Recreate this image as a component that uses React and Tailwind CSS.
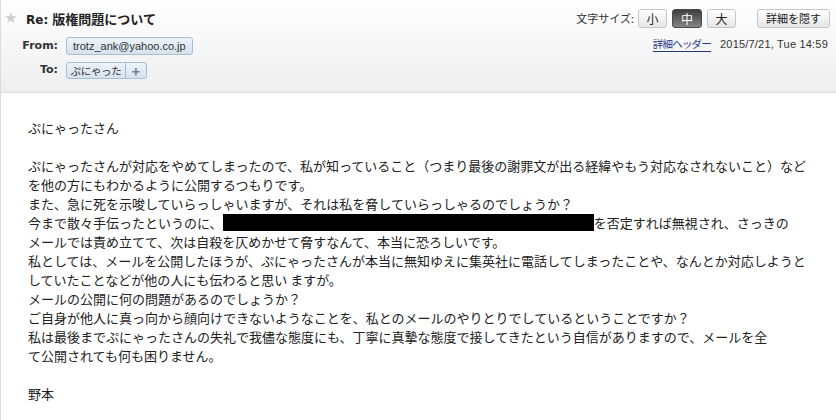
import React from "react";

const jp = { fontFamily: '"Noto Sans CJK JP", "Noto Sans", sans-serif' };

function SmallBtn({ children, active, className = "" }) {
  return (
    <div
      className={
        "h-[19px] flex items-center justify-center rounded-[3px] border " +
        (active
          ? "border-[#4a4a4a] bg-gradient-to-b from-[#3f3f3f] to-[#858585] text-white "
          : "border-[#c6c6c6] bg-gradient-to-b from-white to-[#e6e6e6] text-[#222] ") +
        className
      }
    >
      {children}
    </div>
  );
}

export default function App() {
  const lines = [
    "ぷにゃったさん",
    "",
    "ぷにゃったさんが対応をやめてしまったので、私が知っていること（つまり最後の謝罪文が出る経緯やもう対応なされないこと）など",
    "を他の方にもわかるように公開するつもりです。",
    "また、急に死を示唆していらっしゃいますが、それは私を脅していらっしゃるのでしょうか？",
    "__BOX__",
    "メールでは責め立てて、次は自殺を仄めかせて脅すなんて、本当に恐ろしいです。",
    "私としては、メールを公開したほうが、ぷにゃったさんが本当に無知ゆえに集英社に電話してしまったことや、なんとか対応しようと",
    "していたことなどが他の人にも伝わると思い ますが。",
    "メールの公開に何の問題があるのでしょうか？",
    "ご自身が他人に真っ向から顔向けできないようなことを、私とのメールのやりとりでしているということですか？",
    "私は最後までぷにゃったさんの失礼で我儘な態度にも、丁寧に真摯な態度で接してきたという自信がありますので、メールを全",
    "て公開されても何も困りません。",
    "",
    "野本",
  ];
  return (
    <div className="w-[836px] h-[420px] bg-white border-l border-[#dcdcdc] overflow-hidden" style={jp}>
      <div className="h-[93px] bg-gradient-to-b from-white to-[#eeeeee] border-b border-[#d9d9d9] flex justify-between">
        <div className="flex flex-col pt-[9px]">
          <div className="h-[19px] flex items-center">
            <span className="ml-[3px] w-[14px] text-[15px] leading-none text-[#cfcfcf]" style={{ fontFamily: '"DejaVu Sans", sans-serif' }}>★</span>
            <span className="ml-[8px] text-[13px] font-bold text-[#222] whitespace-nowrap">
              <span style={{ fontFamily: '"DejaVu Sans", sans-serif' }} className="text-[12px]">Re: </span>版権問題について
            </span>
          </div>
          <div className="mt-[9px] h-[18px] flex items-center">
            <span className="w-[57px] text-right text-[11px] font-bold text-[#333]" style={{ fontFamily: '"DejaVu Sans", sans-serif' }}>From:</span>
            <div className="ml-[8px] h-[18px] px-[6px] flex items-center rounded-[3px] border border-[#a9bdd3] bg-gradient-to-b from-[#edf3f9] to-[#d6e2ee] text-[11px] text-[#333]" style={{ fontFamily: '"Liberation Sans", sans-serif' }}>
              trotz_ank@yahoo.co.jp
            </div>
          </div>
          <div className="mt-[7px] h-[17px] flex items-center">
            <span className="w-[57px] text-right text-[11px] font-bold text-[#333]" style={{ fontFamily: '"DejaVu Sans", sans-serif' }}>To:</span>
            <div className="ml-[8px] h-[17px] flex items-center rounded-[3px] border border-[#a9bdd3] bg-gradient-to-b from-[#edf3f9] to-[#d6e2ee] text-[10.5px] text-[#333]">
              <span className="w-[59px] h-full flex items-center justify-center border-r border-[#a9bdd3] tracking-[-0.3px]">ぷにゃった</span>
              <span className="w-[20px] h-full flex items-center justify-center text-[14px] font-bold text-[#6b7f99] leading-none">+</span>
            </div>
          </div>
        </div>
        <div className="flex flex-col items-end pt-[9px] pr-[6px]">
          <div className="flex items-center h-[19px]">
            <span className="text-[11px] text-[#333] mr-[4px]">文字サイズ:</span>
            <SmallBtn className="w-[29px] text-[12px]">小</SmallBtn>
            <SmallBtn active className="w-[30px] ml-[5px] text-[12px]">中</SmallBtn>
            <SmallBtn className="w-[29px] ml-[5px] text-[12px]">大</SmallBtn>
            <SmallBtn className="w-[73px] ml-[21px] text-[11px]">詳細を隠す</SmallBtn>
          </div>
          <div className="mt-[8px] h-[16px] flex items-center pr-[2px]">
            <span className="text-[10.5px] tracking-[-0.8px] text-[#1f3c88] underline underline-offset-[3px] decoration-[#1f3c88]">詳細ヘッダー</span>
            <span className="ml-[9px] text-[11px] text-[#333] tracking-[0.2px]" style={{ fontFamily: '"Liberation Sans", sans-serif' }}>2015/7/21, Tue 14:59</span>
          </div>
        </div>
      </div>
      <div className="pl-[27px] pt-[25px] text-[13px] leading-[19px] text-[#222]">
        {lines.map((l, i) =>
          l === "__BOX__" ? (
            <div key={i} className="whitespace-nowrap flex items-center h-[19px]">
              今まで散々手伝ったというのに、
              <span className="inline-block w-[371px] h-[17px] bg-black" />
              を否定すれば無視され、さっきの
            </div>
          ) : (
            <div key={i} className="whitespace-nowrap h-[19px]">{l || "\u00a0"}</div>
          )
        )}
      </div>
    </div>
  );
}
